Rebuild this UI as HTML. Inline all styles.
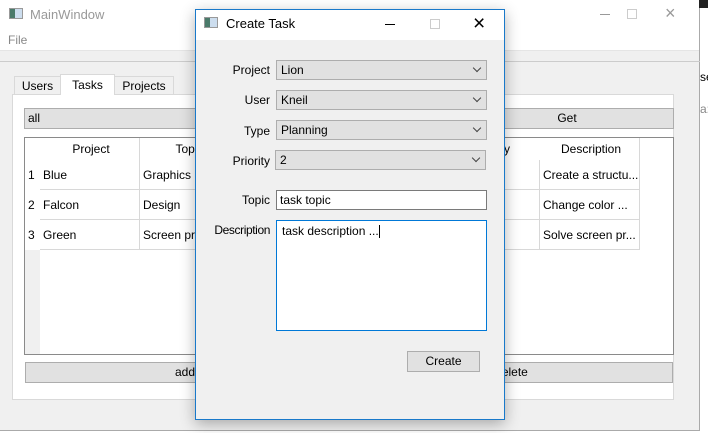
<!DOCTYPE html><html><head><style>
*{box-sizing:border-box;margin:0;padding:0}
body{width:708px;height:433px;overflow:hidden;background:#fff;font-family:"Liberation Sans",sans-serif;font-size:12px;color:#000;position:relative}
.a{position:absolute}
.cb{position:absolute;background:#e1e1e1;border:1px solid #adadad;padding:3px 4px;line-height:12px}
.cb:after{content:"";position:absolute;right:6px;top:4px;width:5px;height:5px;border-right:1px solid #444;border-bottom:1px solid #444;transform:rotate(45deg)}
.btn{position:absolute;background:#e1e1e1;border:1px solid #adadad;text-align:center;line-height:19px}
.lbl{position:absolute;text-align:right;width:80px;left:190px}
.cell{position:absolute;line-height:30px;padding-left:3px;border-right:1px solid #d8d8d8;border-bottom:1px solid #d8d8d8;background:#fff;white-space:nowrap;overflow:hidden}
</style></head><body>
<div class="a" style="left:0;top:0;width:700px;height:431px;background:#f0f0f0;border-right:1px solid #aaa;border-bottom:1px solid #aaa"></div>
<div class="a" style="left:0;top:0;width:699px;height:51px;background:#fff;border-bottom:1px solid #e5e5e5"></div>
<div class="a" style="left:9px;top:8px;width:14px;height:11px;border:1px solid #999;background:linear-gradient(90deg,#4a7a6a 40%,#cde 40%)"></div>
<div class="a" style="left:30px;top:7px;font-size:13px;color:#999">MainWindow</div>
<div class="a" style="left:8px;top:33px;font-size:12px;color:#888">File</div>
<div class="a" style="left:600px;top:14px;width:10px;height:1px;background:#999"></div>
<div class="a" style="left:627px;top:9px;width:10px;height:10px;border:1px solid #ccc"></div>
<div class="a" style="left:665px;top:3px;font-size:18px;color:#999">×</div>
<div class="a" style="left:0;top:61px;width:700px;height:1px;background:#ccc"></div>
<div class="a" style="left:699px;top:0;width:9px;height:8px;background:#222"></div>
<div class="a" style="left:700px;top:70px;font-size:12px">se</div>
<div class="a" style="left:700px;top:102px;font-size:12px;color:#888">a:</div>
<!-- tabs -->
<div class="a" style="left:12px;top:94px;width:662px;height:306px;background:#fff;border:1px solid #d9d9d9"></div>
<div class="a" style="left:14px;top:76px;width:47px;height:19px;background:#f0f0f0;border:1px solid #d9d9d9;text-align:center;line-height:18px">Users</div>
<div class="a" style="left:60px;top:74px;width:55px;height:21px;background:#fff;border:1px solid #d9d9d9;border-bottom:none;text-align:center;line-height:20px">Tasks</div>
<div class="a" style="left:114px;top:76px;width:60px;height:19px;background:#f0f0f0;border:1px solid #d9d9d9;text-align:center;line-height:18px">Projects</div>
<div class="btn" style="left:24px;top:108px;width:400px;height:21px;text-align:left;padding-left:3px">all</div>
<div class="btn" style="left:460px;top:108px;width:214px;height:21px">Get</div>
<!-- table -->
<div class="a" style="left:24px;top:137px;width:650px;height:218px;background:#fff;border:1px solid #8a8a8a"></div>
<div class="a" style="left:25px;top:138px;width:15px;height:216px;background:#f0f0f0"></div>
<div class="a" style="left:25px;top:138px;width:15px;height:112px;background:#fff"></div>
<div class="a" style="left:28px;top:168px">1</div><div class="a" style="left:28px;top:198px">2</div><div class="a" style="left:28px;top:228px">3</div>
<div class="cell" style="left:40px;top:138px;width:100px;height:22px;line-height:22px;text-align:center;border-bottom:none">Project</div>
<div class="cell" style="left:140px;top:138px;width:100px;height:22px;line-height:22px;text-align:center;padding-left:0;border-bottom:none">Topic</div>
<div class="cell" style="left:540px;top:138px;width:100px;height:22px;line-height:22px;text-align:center;border-bottom:none">Description</div>
<div class="a" style="left:504px;top:142px">y</div>
<div class="cell" style="left:40px;top:160px;width:100px;height:30px">Blue</div>
<div class="cell" style="left:140px;top:160px;width:100px;height:30px">Graphics</div>
<div class="cell" style="left:40px;top:190px;width:100px;height:30px">Falcon</div>
<div class="cell" style="left:140px;top:190px;width:100px;height:30px">Design</div>
<div class="cell" style="left:40px;top:220px;width:100px;height:30px">Green</div>
<div class="cell" style="left:140px;top:220px;width:100px;height:30px">Screen problems</div>
<div class="cell" style="left:500px;top:160px;width:40px;height:30px"></div>
<div class="cell" style="left:500px;top:190px;width:40px;height:30px"></div>
<div class="cell" style="left:500px;top:220px;width:40px;height:30px"></div>
<div class="cell" style="left:540px;top:160px;width:100px;height:30px">Create a structu...</div>
<div class="cell" style="left:540px;top:190px;width:100px;height:30px">Change color ...</div>
<div class="cell" style="left:540px;top:220px;width:100px;height:30px">Solve screen pr...</div>
<div class="btn" style="left:25px;top:362px;width:320px;height:21px">add</div>
<div class="btn" style="left:350px;top:362px;width:323px;height:21px">delete</div>
<!-- dialog -->
<div class="a" style="left:195px;top:9px;width:310px;height:411px;background:#f0f0f0;border:1px solid #1979ca;box-shadow:0 4px 14px rgba(0,0,0,.3)"></div>
<div class="a" style="left:196px;top:10px;width:308px;height:30px;background:#fff"></div>
<div class="a" style="left:204px;top:17px;width:14px;height:11px;border:1px solid #999;background:linear-gradient(90deg,#4a7a6a 40%,#cde 40%)"></div>
<div class="a" style="left:226px;top:16px;font-size:13px">Create Task</div>
<div class="a" style="left:385px;top:24px;width:10px;height:1px;background:#000"></div>
<div class="a" style="left:430px;top:19px;width:10px;height:10px;border:1px solid #ccc"></div>
<div class="a" style="left:473px;top:12px;font-size:21px;font-weight:200">×</div>
<div class="lbl" style="top:63px">Project</div>
<div class="lbl" style="top:93px">User</div>
<div class="lbl" style="top:124px">Type</div>
<div class="lbl" style="top:154px">Priority</div>
<div class="lbl" style="top:193px">Topic</div>
<div class="lbl" style="top:223px;letter-spacing:-0.4px">Description</div>
<div class="cb" style="left:276px;top:60px;width:211px;height:20px">Lion</div>
<div class="cb" style="left:276px;top:90px;width:211px;height:20px">Kneil</div>
<div class="cb" style="left:276px;top:120px;width:211px;height:20px">Planning</div>
<div class="cb" style="left:275px;top:150px;width:211px;height:20px">2</div>
<div class="a" style="left:276px;top:190px;width:211px;height:20px;background:#fff;border:1px solid #7a7a7a;padding:3px 3px;line-height:12px">task topic</div>
<div class="a" style="left:276px;top:220px;width:211px;height:111px;background:#fff;border:1px solid #0078d7;padding:4px 5px;line-height:12px">task description ...<span style="display:inline-block;width:1px;height:13px;background:#000;vertical-align:middle"></span></div>
<div class="btn" style="left:407px;top:351px;width:73px;height:21px">Create</div>
</body></html>
